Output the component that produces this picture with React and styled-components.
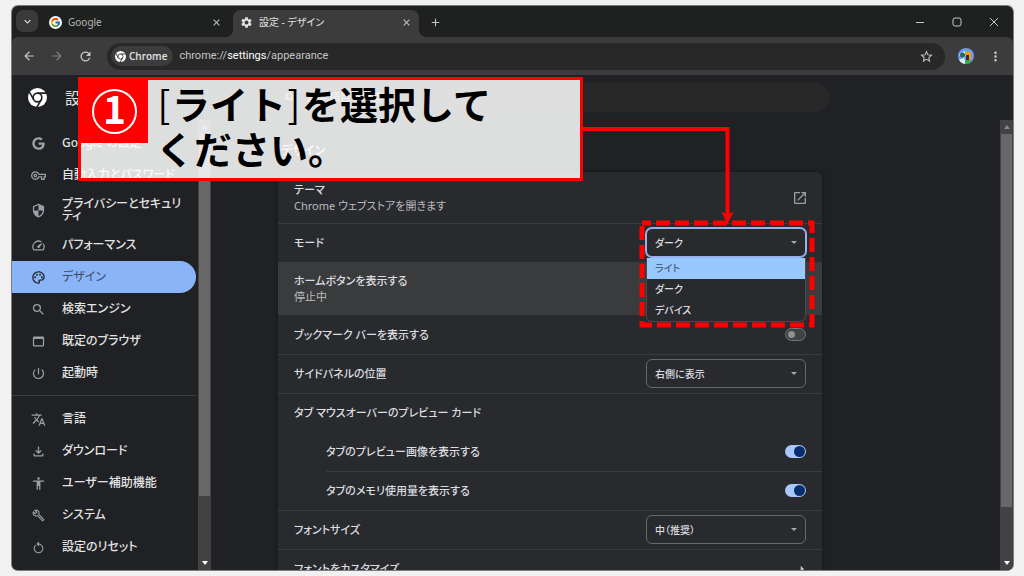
import React from "react";
import styled, { createGlobalStyle, css } from "styled-components";
import {
  MdOutlineVpnKey, MdSecurity, MdOutlineSpeed, MdOutlinePalette, MdSearch,
  MdOutlineWebAsset, MdPowerSettingsNew, MdTranslate, MdOutlineFileDownload,
  MdAccessibility, MdOutlineBuild, MdRefresh, MdArrowBack, MdArrowForward,
  MdStarBorder, MdMoreVert, MdClose, MdAdd, MdSettings, MdKeyboardArrowDown,
  MdOpenInNew, MdArrowRight,
} from "react-icons/md";
import { FcGoogle } from "react-icons/fc";
import { FaGoogle } from "react-icons/fa";

const GlobalStyle = createGlobalStyle`
  *, *::before, *::after { box-sizing: border-box; }
  body { margin: 0; background: #f1f1f1; }
  button, input, select { font: inherit; color: inherit; }
  button { padding: 0; border: 0; background: none; }
  a { color: inherit; text-decoration: none; }
`;

const Page = styled.div`
  position: relative;
  height: 100vh;
  padding: 6px 11px 6px 12px;
  overflow: hidden;
  font-family: "Noto Sans", "Noto Sans CJK JP", sans-serif;
  font-feature-settings: "palt";
  font-size: 11px;
  line-height: 16px;
  color: #e3e3e3;
`;

const BrowserWindow = styled.div`
  display: flex;
  flex-direction: column;
  height: 100%;
  overflow: hidden;
  border-radius: 6px;
  background: #1f2120;
  box-shadow: 0 0 0 1px #7c7e7d;
`;

/* ---------- tab strip ---------- */
const TabStrip = styled.header`
  display: flex;
  flex: none;
  height: 31px;
  padding: 4px 0 0 4px;
  font-size: 10px;
`;

const TabSearch = styled.button`
  display: grid;
  place-items: center;
  width: 22px;
  height: 22px;
  border-radius: 7px;
  background: #3a3a3a;
`;

const Tab = styled.div`
  position: relative;
  display: flex;
  align-items: center;
  gap: 6px;
  width: ${(p) => (p.$active ? 186 : 195)}px;
  height: 27px;
  padding: ${(p) => (p.$active ? "0 7px 3px 7px" : "0 11px 3px 11px")};
  color: ${(p) => (p.$active ? "#e3e3e3" : "#b4b6b5")};

  ${(p) =>
    p.$active &&
    css`
      border-radius: 8px 8px 0 0;
      background: #3c3c3c;
      &::before,
      &::after {
        content: "";
        position: absolute;
        bottom: 0;
        width: 8px;
        height: 8px;
      }
      &::before {
        right: 100%;
        background: radial-gradient(circle at 0 0, transparent 8px, #3c3c3c 8px);
      }
      &::after {
        left: 100%;
        background: radial-gradient(circle at 100% 0, transparent 8px, #3c3c3c 8px);
      }
    `}
`;

const TabTitle = styled.span`
  flex: 1;
`;

const Favicon = styled.span`
  display: grid;
  place-items: center;
  width: 13px;
  height: 13px;
  border-radius: 50%;
  background: #fff;
`;

const IconButton = styled.button`
  display: grid;
  place-items: center;
  width: ${(p) => p.$w || 12}px;
  height: 20px;
  color: ${(p) => p.$color || "#c7c7c7"};
`;

const NewTab = styled(IconButton)`
  margin: 2px 0 0 10px;
`;

const WindowControls = styled.div`
  display: flex;
  gap: 25px;
  margin: 2px 13px 0 auto;
`;

/* ---------- toolbar ---------- */
const Toolbar = styled.nav`
  display: flex;
  align-items: center;
  flex: none;
  height: 38px;
  padding: 0 10px 0 9px;
  border-radius: 6px 6px 0 0;
  background: #3c3c3c;
`;

const NavButtons = styled.div`
  display: flex;
  gap: 12px;
  margin-right: 14px;
`;

const Omnibox = styled.div`
  display: flex;
  align-items: center;
  flex: 1;
  height: 27px;
  padding: 0 11px 0 4px;
  border-radius: 14px;
  background: #282828;
  font-family: Roboto, sans-serif;
`;

const SiteChip = styled.button`
  display: flex;
  align-items: center;
  gap: 3px;
  height: 20px;
  padding: 0 6px 0 4px;
  border-radius: 10px;
  background: #3c3c3c;
  font-family: "Open Sans", sans-serif;
  font-size: 10px;
  font-weight: 600;
`;

const Url = styled.span`
  flex: 1;
  padding-left: 6px;
  color: #c4c6c5;
  b {
    font-weight: 400;
    color: #fff;
  }
`;

const Avatar = styled.button`
  width: 16px;
  height: 16px;
  margin: 0 13px;
`;

/* ---------- settings page ---------- */
const Settings = styled.div`
  display: flex;
  flex-direction: column;
  flex: 1;
  min-height: 0;
  background: #202124;
`;

const SettingsHeader = styled.div`
  display: flex;
  align-items: center;
  flex: none;
  height: 45px;
`;

const Brand = styled.div`
  display: flex;
  align-items: center;
  gap: 18px;
  width: 266px;
  padding-left: 16px;
  h1 {
    margin: 0;
    font-size: 16px;
    font-weight: 400;
  }
`;

const SearchField = styled.label`
  display: flex;
  align-items: center;
  gap: 8px;
  flex: 0 1 552px;
  height: 29px;
  padding: 0 8px 0 6px;
  border-radius: 15px;
  background: #282828;
  input {
    flex: 1;
    border: 0;
    outline: 0;
    background: none;
  }
  input::placeholder {
    color: #c7c7c7;
  }
`;

const Columns = styled.div`
  display: grid;
  grid-template-columns: 199px 1fr;
  flex: 1;
  min-height: 0;
`;

const Pane = styled.div`
  display: flex;
  min-width: 0;
  min-height: 0;
  overflow: hidden;
`;

const SideMenu = styled.nav`
  flex: 1;
  padding: 7px 2px 0 0;
  font-size: 12px;
  font-weight: 500;
`;

const MenuItem = styled.a`
  display: flex;
  align-items: center;
  gap: 16px;
  height: ${(p) => (p.$tall ? 38 : 32)}px;
  padding: 0 8px 0 19px;
  border-radius: 0 16px 16px 0;
  line-height: 12px;
  ${(p) =>
    p.$selected &&
    css`
      background: #8ab4f8;
      color: #3c4a63;
      font-weight: 400;
    `}
  svg {
    flex: none;
    color: ${(p) => (p.$selected ? "#202124" : "#9aa0a6")};
  }
`;

const MenuDivider = styled.hr`
  height: 1px;
  margin: 6px 0 7px;
  border: 0;
  background: #3a3c3f;
`;

const Track = styled.div`
  display: flex;
  flex-direction: column;
  align-items: center;
  flex: none;
  width: 13px;
  background: #424242;
`;

const TrackArrow = styled.span`
  flex: none;
  height: 14px;
  display: grid;
  place-items: center;
  &::before {
    content: "";
    border: 3px solid transparent;
    ${(p) =>
      p.$down
        ? "border-top: 4px solid #fff; border-bottom: 0;"
        : "border-bottom: 4px solid #8a8a8a; border-top: 0;"}
  }
`;

const Thumb = styled.div`
  flex: ${(p) => p.$share} 0 0;
  width: 11px;
  background: #686868;
`;

const Rest = styled.div`
  flex: ${(p) => p.$share} 0 0;
`;

const Content = styled.main`
  flex: 1;
  min-width: 0;
  padding-left: 67px;
  h2 {
    margin: 0;
    padding: 23px 3px 13px;
    font-size: 12px;
    font-weight: 500;
  }
`;

const Card = styled.section`
  max-width: 544px;
  border-radius: 6px;
  background: #292a2d;
  box-shadow: 0 0 3px 1px #1a1b1d;
`;

const Row = styled.div`
  display: flex;
  align-items: center;
  justify-content: space-between;
  height: ${(p) => p.$h || 39}px;
  margin-left: ${(p) => (p.$nested ? 48 : 0)}px;
  padding: 0 16px 1px ${(p) => (p.$nested ? 0 : 16)}px;
  border-top: 1px solid ${(p) => (p.$line ? "#3a3c3f" : "transparent")};
  background: ${(p) => (p.$hover ? "#3a3b3c" : "none")};
  color: #dcdde0;
  font-weight: 500;
`;

const RowText = styled.div`
  small {
    display: block;
    font-size: 11px;
    font-weight: 400;
    color: #b9bbbe;
  }
`;

const SelectWrap = styled.div`
  position: relative;
  width: 160px;
  font-size: 10px;
  &::after {
    content: "";
    position: absolute;
    top: 13px;
    right: 9px;
    border: 3px solid transparent;
    border-top-color: #a6a8aa;
    border-bottom: 0;
  }
`;

const Select = styled.select`
  appearance: none;
  display: block;
  width: 100%;
  height: 29px;
  padding: 0 8px;
  border: 1px solid #66686a;
  border-radius: 6px;
  outline: 0;
  background: #292a2d;
  ${(p) =>
    p.$focused &&
    css`
      border-color: #96b3ee;
      box-shadow: 0 0 0 1px #96b3ee;
    `}
`;

const Popup = styled.ul`
  position: absolute;
  z-index: 1;
  top: 100%;
  left: 0;
  right: 0;
  margin: 1px 0 0;
  padding: 0;
  overflow: hidden;
  border: 1px solid #47494b;
  border-top: 0;
  border-radius: 0 0 6px 6px;
  background: #292a2d;
  list-style: none;
`;

const Option = styled.li`
  height: 21px;
  padding: 0 8px;
  line-height: 21px;
  background: ${(p) => (p.$active ? "#99c8ff" : "none")};
  color: ${(p) => (p.$active ? "#4c6078" : "inherit")};
`;

const Toggle = styled.input.attrs({ type: "checkbox" })`
  appearance: none;
  display: flex;
  align-items: center;
  width: 21px;
  height: 13px;
  margin: 0;
  padding: 0 2px;
  border: 1px solid #757775;
  border-radius: 7px;
  background: #3f4242;
  &::before {
    content: "";
    width: 7px;
    height: 7px;
    border-radius: 50%;
    background: #8e918f;
  }
  &:checked {
    justify-content: flex-end;
    padding: 0 1px;
    border: 0;
    background: #a8c7fa;
  }
  &:checked::before {
    width: 11px;
    height: 11px;
    background: #062e6f;
  }
`;

/* ---------- annotation over the browser ---------- */
const Callout = styled.aside`
  position: absolute;
  z-index: 3;
  top: 77px;
  left: 78px;
  display: flex;
  align-items: flex-start;
  gap: 8px;
  width: 505px;
  height: 104px;
  border: 3px solid #f00;
  background: rgba(255, 255, 255, 0.85);
  color: #000;
  p {
    margin: 0;
    font-family: "Noto Sans CJK JP", sans-serif;
    font-feature-settings: normal;
    font-size: 38px;
    font-weight: 700;
    line-height: 45px;
  }
  i {
    display: inline-block;
    width: 16px;
    font-style: normal;
    font-weight: 400;
    text-align: center;
  }
`;

const StepBlock = styled.div`
  display: grid;
  place-items: center;
  width: 67px;
  height: 63px;
  background: #f00;
`;

const StepNumber = styled.span`
  display: grid;
  place-items: center;
  width: 45px;
  height: 45px;
  padding-bottom: 10px;
  border: 2px solid #fff;
  border-radius: 50%;
  color: #fff;
  font-family: "Noto Sans CJK JP", sans-serif;
  font-size: 39px;
  font-weight: 700;
  line-height: 30px;
`;

const Marks = styled.svg`
  position: absolute;
  z-index: 2;
  top: 120px;
  left: 580px;
  pointer-events: none;
`;

const ChromeLogo = ({ size, seam }) => (
  <svg width={size} height={size} viewBox="0 0 24 24" aria-hidden="true">
    <circle cx="12" cy="12" r="12" fill="#fff" />
    <g fill="none" stroke={seam} strokeWidth="2">
      <circle cx="12" cy="12" r="5.500" />
      <path d="M12 6.500H24" />
      <path d="M12 6.500H24" transform="rotate(120 12 12)" />
      <path d="M12 6.500H24" transform="rotate(240 12 12)" />
    </g>
  </svg>
);

const ResetIcon = ({ size }) => (
  <svg width={size} height={size} viewBox="0 0 24 24" fill="none" stroke="currentColor" strokeWidth="2">
    <path d="M7 7.500A8 8 0 1 0 17 7.500" />
    <path d="M13 1v9l-5-4.500z" fill="currentColor" stroke="none" />
    <path d="M12 5.500a8 8 0 0 1 5 2" />
  </svg>
);

const AvatarPicture = () => (
  <svg width="16" height="16" viewBox="0 0 16 16" aria-hidden="true">
    <clipPath id="face"><circle cx="8" cy="8" r="8" /></clipPath>
    <g clipPath="url(#face)">
      <rect width="16" height="16" fill="#6a9df0" />
      <path d="M1 7l5-4 3 2-3 5z" fill="#d5e6f5" />
      <circle cx="4.500" cy="7" r="2.500" fill="#1d6b55" />
      <path d="M7 4h6v8h-2V7H7z" fill="#f29a1c" />
      <path d="M8 7h3v5H8z" fill="#3b2b26" />
      <path d="M0 12l6-2 3 6H0z" fill="#e6edf2" />
      <path d="M7 12l6 0 1 4H7z" fill="#34a853" />
    </g>
  </svg>
);

const menuTop = [
  { icon: FaGoogle, label: "Google の設定", size: 13 },
  { icon: MdOutlineVpnKey, label: "自動入力とパスワード" },
  { icon: MdSecurity, label: "プライバシーとセキュリティ", tall: true },
  { icon: MdOutlineSpeed, label: "パフォーマンス" },
  { icon: MdOutlinePalette, label: "デザイン", selected: true },
  { icon: MdSearch, label: "検索エンジン" },
  { icon: MdOutlineWebAsset, label: "既定のブラウザ" },
  { icon: MdPowerSettingsNew, label: "起動時" },
];

const menuBottom = [
  { icon: MdTranslate, label: "言語" },
  { icon: MdOutlineFileDownload, label: "ダウンロード" },
  { icon: MdAccessibility, label: "ユーザー補助機能" },
  { icon: MdOutlineBuild, label: "システム", size: 13 },
  { icon: ResetIcon, label: "設定のリセット", size: 13 },
];

const IconSlot = styled.span`
  display: grid;
  place-items: center;
  flex: none;
  width: 15px;
`;

const Menu = ({ items }) =>
  items.map(({ icon: Icon, label, size = 15, tall, selected }) => (
    <MenuItem href="#" key={label} $tall={tall} $selected={selected}>
      <IconSlot><Icon size={size} /></IconSlot>
      <span>{label}</span>
    </MenuItem>
  ));

const Scrollbar = ({ thumb, rest }) => (
  <Track aria-hidden="true">
    <TrackArrow />
    <Thumb $share={thumb} />
    <Rest $share={rest} />
    <TrackArrow $down />
  </Track>
);

const ToggleRow = ({ id, label, note, on, ...row }) => (
  <Row {...row}>
    <RowText>
      <label htmlFor={id}>{label}</label>
      {note && <small>{note}</small>}
    </RowText>
    <Toggle id={id} defaultChecked={on} />
  </Row>
);

const SelectRow = ({ id, label, options, focused, children, ...row }) => (
  <Row {...row}>
    <label htmlFor={id}>{label}</label>
    <SelectWrap>
      <Select id={id} $focused={focused}>
        {options.map((o) => <option key={o}>{o}</option>)}
      </Select>
      {children}
    </SelectWrap>
  </Row>
);

export default function App() {
  return (
    <Page>
      <GlobalStyle />
      <BrowserWindow>
        <TabStrip>
          <TabSearch aria-label="タブを検索"><MdKeyboardArrowDown size={13} /></TabSearch>
          <Tab>
            <Favicon><FcGoogle size={11} /></Favicon>
            <TabTitle>Google</TabTitle>
            <IconButton aria-label="閉じる"><MdClose size={11} /></IconButton>
          </Tab>
          <Tab $active>
            <MdSettings size={13} />
            <TabTitle>設定 - デザイン</TabTitle>
            <IconButton aria-label="閉じる"><MdClose size={11} /></IconButton>
          </Tab>
          <NewTab aria-label="新しいタブ"><MdAdd size={13} /></NewTab>
          <WindowControls>
            <IconButton aria-label="最小化">
              <svg width="10" height="10"><path d="M1 5.500h8" stroke="currentColor" /></svg>
            </IconButton>
            <IconButton aria-label="最大化">
              <svg width="10" height="10"><rect x="1" y="1" width="8" height="8" rx="2" fill="none" stroke="currentColor" /></svg>
            </IconButton>
            <IconButton aria-label="ウィンドウを閉じる">
              <svg width="10" height="10"><path d="M1 1l8 8M9 1l-8 8" stroke="currentColor" /></svg>
            </IconButton>
          </WindowControls>
        </TabStrip>

        <Toolbar>
          <NavButtons>
            <IconButton $w={16} aria-label="戻る"><MdArrowBack size={14} /></IconButton>
            <IconButton $w={16} $color="#7c7c7c" aria-label="進む"><MdArrowForward size={14} /></IconButton>
            <IconButton $w={16} aria-label="再読み込み"><MdRefresh size={15} /></IconButton>
          </NavButtons>
          <Omnibox>
            <SiteChip><ChromeLogo size={11} seam="#3c3c3c" />Chrome</SiteChip>
            <Url>chrome://<b>settings</b>/appearance</Url>
            <IconButton $w={16} aria-label="ブックマーク"><MdStarBorder size={15} /></IconButton>
          </Omnibox>
          <Avatar aria-label="プロフィール"><AvatarPicture /></Avatar>
          <IconButton $w={16} aria-label="メニュー"><MdMoreVert size={15} /></IconButton>
        </Toolbar>

        <Settings>
          <SettingsHeader>
            <Brand>
              <ChromeLogo size={19} seam="#202124" />
              <h1>設定</h1>
            </Brand>
            <SearchField>
              <MdSearch size={13} />
              <input placeholder="設定項目を検索" aria-label="設定項目を検索" />
            </SearchField>
          </SettingsHeader>

          <Columns>
            <Pane>
              <SideMenu>
                <Menu items={menuTop} />
                <MenuDivider />
                <Menu items={menuBottom} />
              </SideMenu>
              <Scrollbar thumb={362} rest={60} />
            </Pane>
            <Pane>
              <Content>
                <h2>デザイン</h2>
                <Card>
                  <Row $h={51}>
                    <RowText>テーマ<small>Chrome ウェブストアを開きます</small></RowText>
                    <IconButton $w={14} $color="#9aa0a6" aria-label="ウェブストアを開く"><MdOpenInNew size={16} /></IconButton>
                  </Row>
                  <SelectRow id="mode" label="モード" options={["ダーク", "ライト", "デバイス"]} focused $line>
                    <Popup role="listbox">
                      <Option role="option" $active>ライト</Option>
                      <Option role="option">ダーク</Option>
                      <Option role="option">デバイス</Option>
                    </Popup>
                  </SelectRow>
                  <ToggleRow id="home" label="ホームボタンを表示する" note="停止中" $h={53} $hover />
                  <ToggleRow id="bookmarks" label="ブックマーク バーを表示する" />
                  <SelectRow id="panel" label="サイドパネルの位置" options={["右側に表示", "左側に表示"]} $line />
                  <Row $line>タブ マウスオーバーのプレビュー カード</Row>
                  <ToggleRow id="preview" label="タブのプレビュー画像を表示する" on $nested />
                  <ToggleRow id="memory" label="タブのメモリ使用量を表示する" on $nested $line />
                  <SelectRow id="size" label="フォントサイズ" options={["中（推奨）", "大", "小"]} $line />
                  <Row $line>
                    フォントをカスタマイズ
                    <IconButton $w={12} aria-label="フォントをカスタマイズ"><MdArrowRight size={16} /></IconButton>
                  </Row>
                </Card>
              </Content>
              <Scrollbar thumb={373} rest={49} />
            </Pane>
          </Columns>
        </Settings>
      </BrowserWindow>

      <Marks width="240" height="212" viewBox="580 120 240 212" fill="none" stroke="#f00" aria-hidden="true">
        <path d="M583 129H727.500V216" strokeWidth="4" />
        <path d="M727.500 224l-6-12 6 2 6-2z" fill="#f00" stroke="none" />
        <rect x="642" y="223" width="170" height="102" strokeWidth="5" strokeDasharray="14 5" strokeDashoffset="5" />
      </Marks>

      <Callout>
        <StepBlock><StepNumber>1</StepNumber></StepBlock>
        <p><i>[</i>ライト<i>]</i>を選択して<br />ください。</p>
      </Callout>
    </Page>
  );
}
